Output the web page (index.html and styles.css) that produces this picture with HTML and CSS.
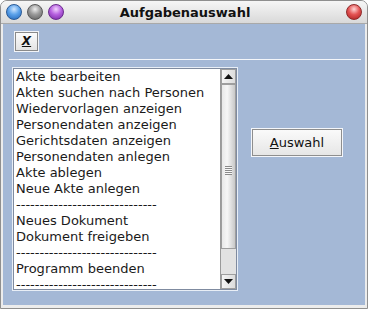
FILE: index.html
```html
<!DOCTYPE html>
<html lang="de">
<head>
    <meta charset="UTF-8">
    <title>Aufgabenauswahl</title>
    <link rel="stylesheet" href="styles.css">
</head>
<body>
    <div class="window">
        <div class="titlebar">
            <div class="lights">
                <span class="light blue"></span>
                <span class="light grey"></span>
                <span class="light purple"></span>
            </div>
            <div class="title">Aufgabenauswahl</div>
            <span class="light red"></span>
        </div>
        <div class="frame">
            <div class="content">
                <div class="toolbar">
                    <button class="tool-btn"><u>X</u></button>
                </div>
                <div class="separator"></div>
                <div class="main">
                    <div class="listbox">
                        <ul class="items">
                            <li>Akte bearbeiten</li>
                            <li>Akten suchen nach Personen</li>
                            <li>Wiedervorlagen anzeigen</li>
                            <li>Personendaten anzeigen</li>
                            <li>Gerichtsdaten anzeigen</li>
                            <li>Personendaten anlegen</li>
                            <li>Akte ablegen</li>
                            <li>Neue Akte anlegen</li>
                            <li>------------------------------</li>
                            <li>Neues Dokument</li>
                            <li>Dokument freigeben</li>
                            <li>------------------------------</li>
                            <li>Programm beenden</li>
                            <li>------------------------------</li>
                        </ul>
                        <div class="scrollbar">
                            <div class="arrow">
                                <svg width="9" height="5" viewBox="0 0 9 5"><path d="M4.5 0 L9 5 L0 5 Z" fill="#111"/></svg>
                            </div>
                            <div class="track">
                                <div class="thumb">
                                    <div class="grip"></div>
                                </div>
                            </div>
                            <div class="arrow">
                                <svg width="9" height="5" viewBox="0 0 9 5"><path d="M0 0 L9 0 L4.5 5 Z" fill="#111"/></svg>
                            </div>
                        </div>
                    </div>
                    <div class="side">
                        <button class="action-btn"><u>A</u>uswahl</button>
                    </div>
                </div>
            </div>
        </div>
    </div>
</body>
</html>
```

FILE: styles.css
```css
* {
    margin: 0;
    padding: 0;
    box-sizing: border-box;
    font-family: "DejaVu Sans", sans-serif;
}

body {
    background-color: #ffffff;
}

.window {
    width: 368px;
    height: 309px;
    border: 1px solid #8f8f8f;
    border-radius: 7px 7px 0 0;
    background-color: #ececec;
    display: flex;
    flex-direction: column;
    overflow: hidden;
}

.titlebar {
    height: 23px;
    display: flex;
    align-items: center;
    padding: 0 4px 0 5px;
    background: linear-gradient(#f6f6f6, #d9d9d9);
    border-bottom: 1px solid #a9a9a9;
}

.lights {
    display: flex;
    gap: 5px;
    width: 68px;
}

.light {
    display: block;
    width: 16px;
    height: 16px;
    border-radius: 50%;
    border: 1px solid #555;
}

.light.blue {
    background: radial-gradient(circle at 50% 30%, #cfe6ff 0, #5ca2ea 45%, #1f64b8 100%);
    border-color: #2a5a96;
}

.light.grey {
    background: radial-gradient(circle at 50% 30%, #eeeeee 0, #9a9a9a 45%, #5c5c5c 100%);
    border-color: #5a5a5a;
}

.light.purple {
    background: radial-gradient(circle at 50% 30%, #f2d2ff 0, #b761e0 45%, #7226a0 100%);
    border-color: #6a2a8e;
}

.light.red {
    background: radial-gradient(circle at 50% 30%, #ffd6d6 0, #e45454 45%, #a81c1c 100%);
    border-color: #8e2a2a;
    margin-right: 1px;
}

.title {
    flex: 1;
    text-align: center;
    font-size: 13px;
    font-weight: bold;
    color: #111;
    padding-right: 50px;
}

.frame {
    flex: 1;
    padding: 0 2px 3px 2px;
    display: flex;
}

.content {
    flex: 1;
    background-color: #a4b8d6;
}

.toolbar {
    padding: 6px 0 0 12px;
}

.tool-btn {
    width: 23px;
    height: 19px;
    border: 1px solid #8a8a8a;
    outline: 1px solid #f2f4f8;
    background: linear-gradient(#fbfbfb, #e4e4e4);
    font-size: 12px;
    font-weight: bold;
    font-style: italic;
    color: #111;
}

.separator {
    height: 1px;
    margin: 8px 4px 0 6px;
    background-color: #f4f6fa;
}

.main {
    display: flex;
    padding: 8px 0 0 10px;
}

.listbox {
    width: 224px;
    height: 222px;
    border: 1px solid #7f8ba0;
    outline: 1px solid #e8eef6;
    background-color: #ffffff;
    display: flex;
    overflow: hidden;
}

.items {
    flex: 1;
    list-style: none;
    padding: 0 0 0 2px;
    font-size: 13px;
    line-height: 16px;
    color: #1a1a1a;
    overflow: hidden;
    white-space: nowrap;
}

.scrollbar {
    width: 16px;
    display: flex;
    flex-direction: column;
    border-left: 1px solid #9a9a9a;
    background-color: #e2e2e2;
}

.arrow {
    height: 15px;
    display: flex;
    align-items: center;
    justify-content: center;
    background: linear-gradient(to right, #f4f4f4, #dcdcdc);
    border: 1px solid #9e9e9e;
}

.track {
    flex: 1;
    display: flex;
    flex-direction: column;
}

.thumb {
    height: 165px;
    background: linear-gradient(to right, #e8e8e8, #f6f6f6 40%, #c8c8c8);
    border: 1px solid #9e9e9e;
    display: flex;
    align-items: center;
    justify-content: center;
    padding-top: 8px;
}

.grip {
    width: 7px;
    height: 9px;
    background: repeating-linear-gradient(#8a8a8a 0, #8a8a8a 1px, #f8f8f8 1px, #f8f8f8 2px);
}

.side {
    padding: 61px 0 0 15px;
}

.action-btn {
    width: 90px;
    height: 27px;
    border: 1px solid #8e8e8e;
    outline: 1px solid #f4f6fa;
    background: linear-gradient(#fafafa, #e6e6e6);
    font-size: 13px;
    color: #111;
}
```
